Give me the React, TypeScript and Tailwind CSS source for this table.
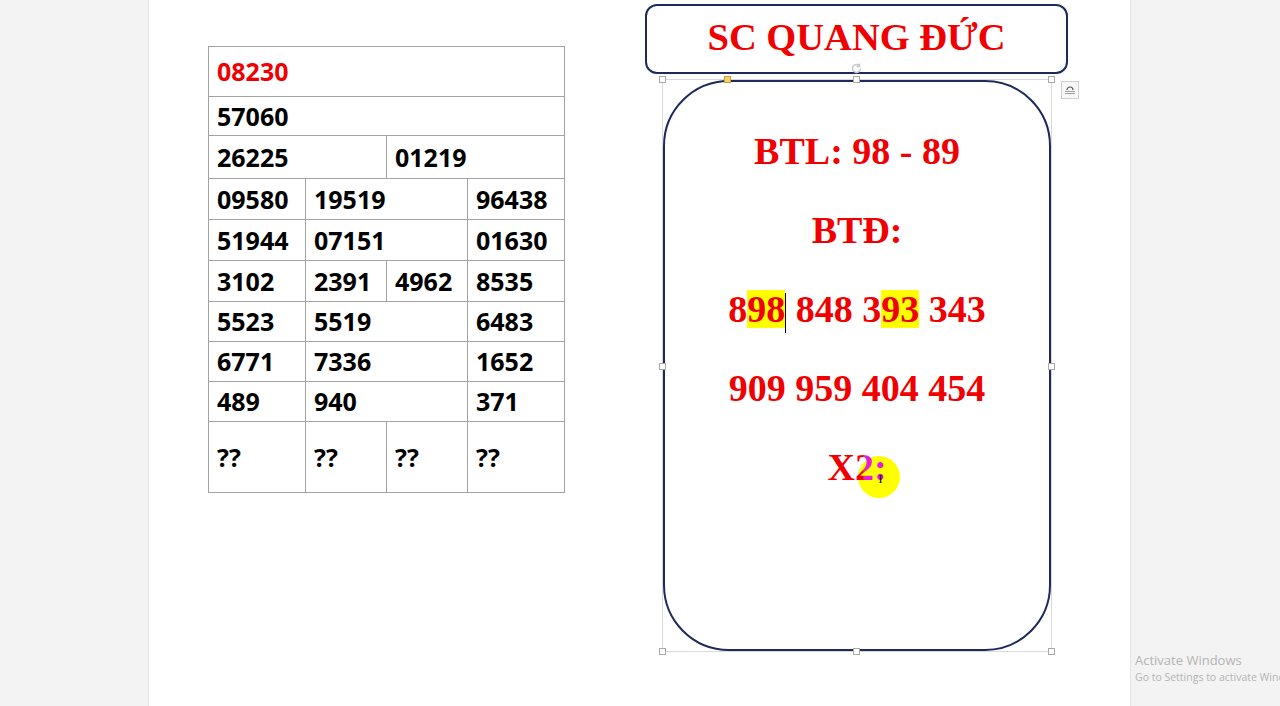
import React from "react"

const cell = "border border-[#a3a3a3] pl-[8px] align-middle"

function Handle({ className }: { className: string }) {
  return <span className={`absolute h-[7px] w-[7px] border border-[#a9a9a9] bg-white ${className}`} />
}

export default function App() {
  const lines: React.ReactNode[] = [
    "BTL: 98 - 89",
    "BTĐ:",
    <>
      8<span className="bg-[#ffff00]">98</span>
      <span className="inline-block h-[40px] w-px translate-y-[4px] bg-black" /> 848 3
      <span className="bg-[#ffff00]">93</span> 343
    </>,
    "909 959 404 454",
    <span className="relative inline-block">
      <span className="absolute left-[31px] top-[8px] h-[42px] w-[42px] rounded-full bg-[#ffff00]" />
      <span className="relative">
        X
        <span className="bg-gradient-to-r from-[#f00000] from-40% to-[#e21ce2] to-60% bg-clip-text text-transparent">2</span>
        <span className="text-[#e21ce2]">:</span>
      </span>
      <span className="absolute left-[51px] top-[25px] text-[12px] font-normal leading-none text-black">I</span>
    </span>,
  ]

  return (
    <div className="relative flex h-[706px] w-[1280px] overflow-hidden bg-[#f3f3f3] font-['Open_Sans',sans-serif]">
      <div className="w-[149px] border-r border-[#e6e6e6]" />

      <div className="flex w-[981px] bg-white">
        {/* results table */}
        <div className="ml-[59px] mt-[46px]">
          <table className="w-[357px] table-fixed border-collapse text-[25px] font-bold leading-none text-black">
            <colgroup>
              <col className="w-[97px]" />
              <col className="w-[81px]" />
              <col className="w-[81px]" />
              <col className="w-[97px]" />
            </colgroup>
            <tbody>
              <tr className="h-[50px]">
                <td colSpan={4} className={`${cell} text-[#f00000]`}>08230</td>
              </tr>
              <tr className="h-[39px]">
                <td colSpan={4} className={cell}>57060</td>
              </tr>
              <tr className="h-[43px]">
                <td colSpan={2} className={cell}>26225</td>
                <td colSpan={2} className={cell}>01219</td>
              </tr>
              {[
                ["09580", "19519", "96438"],
                ["51944", "07151", "01630"],
              ].map((r) => (
                <tr key={r[0]} className="h-[41px]">
                  <td className={cell}>{r[0]}</td>
                  <td colSpan={2} className={cell}>{r[1]}</td>
                  <td className={cell}>{r[2]}</td>
                </tr>
              ))}
              <tr className="h-[41px]">
                <td className={cell}>3102</td>
                <td className={cell}>2391</td>
                <td className={cell}>4962</td>
                <td className={cell}>8535</td>
              </tr>
              {[
                ["5523", "5519", "6483"],
                ["6771", "7336", "1652"],
                ["489", "940", "371"],
              ].map((r) => (
                <tr key={r[0]} className="h-[40px]">
                  <td className={cell}>{r[0]}</td>
                  <td colSpan={2} className={cell}>{r[1]}</td>
                  <td className={cell}>{r[2]}</td>
                </tr>
              ))}
              <tr className="h-[71px]">
                <td className={cell}>??</td>
                <td className={cell}>??</td>
                <td className={cell}>??</td>
                <td className={cell}>??</td>
              </tr>
            </tbody>
          </table>
        </div>

        {/* right shapes */}
        <div className="ml-[80px] mt-[4px] flex flex-col font-['Liberation_Serif',serif] font-bold text-[#f00000]">
          <div className="flex h-[70px] w-[423px] items-center justify-center rounded-[12px] border-2 border-[#1f2a5c] pb-[3px] text-[38.5px] leading-none">
            SC QUANG ĐỨC
          </div>

          <div className="relative ml-[17px] mt-[5px] h-[573px] w-[390px] border border-[#d9d9d9]">
            <div className="flex h-full w-full flex-col items-center rounded-[66px] border-2 border-[#1f2a5c] pt-[29px] text-[38px]">
              {lines.map((l, i) => (
                <div key={i} className="flex h-[79px] items-center whitespace-pre leading-none">
                  {l}
                </div>
              ))}
            </div>
            <Handle className="-left-[4px] -top-[4px]" />
            <Handle className="left-[190px] -top-[4px]" />
            <Handle className="-right-[4px] -top-[4px]" />
            <Handle className="-left-[4px] top-[283px]" />
            <Handle className="-right-[4px] top-[283px]" />
            <Handle className="-bottom-[4px] -left-[4px]" />
            <Handle className="-bottom-[4px] left-[190px]" />
            <Handle className="-bottom-[4px] -right-[4px]" />
            <span className="absolute left-[61px] -top-[4px] h-[7px] w-[7px] border border-[#c8a030] bg-[#f5d36a]" />
            {/* rotate handle */}
            <svg className="absolute left-[187px] -top-[18px]" width="13" height="13" viewBox="0 0 13 13" fill="none">
              <path d="M10.5 6.5a4 4 0 1 1-1.2-2.9" stroke="#c9c9c9" strokeWidth="1.5" />
              <path d="M9.5 1.5v3h-3" stroke="#c9c9c9" strokeWidth="1.5" />
            </svg>
            {/* layout options */}
            <div className="absolute -right-[28px] top-[1px] flex h-[18px] w-[18px] items-center justify-center border border-[#cfcfcf] bg-[#f7f7f7]">
              <svg width="12" height="10" viewBox="0 0 12 10" fill="none">
                <path d="M3 5a3 3 0 0 1 6 0" stroke="#555" strokeWidth="1.2" />
                <path d="M1 6.5h10M1 8.5h10" stroke="#8a8a8a" strokeWidth="0.8" />
              </svg>
            </div>
          </div>
        </div>
      </div>

      <div className="flex-1 border-l border-[#e6e6e6]" />

      <div className="absolute left-[1135px] top-[651px] w-[145px] overflow-hidden font-['Open_Sans',sans-serif] text-[#b3b3b3]">
        <div className="text-[13px] leading-[18px]">Activate Windows</div>
        <div className="whitespace-nowrap text-[10.5px] leading-[16px]">Go to Settings to activate Windows.</div>
      </div>
    </div>
  )
}
